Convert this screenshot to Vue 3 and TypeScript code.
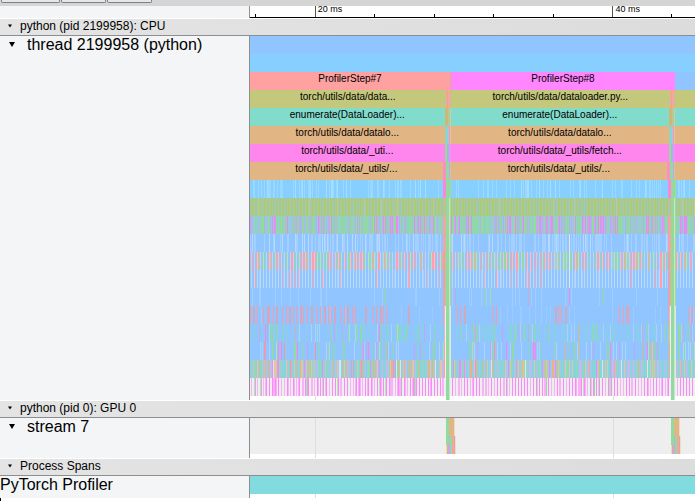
<script setup lang="ts">
import { reactive } from 'vue'

interface Slice { w: number; c: string; t?: string }
interface Bar { x: number; y: number; w: number; h: number; c: string }
interface Lane { base: string; density: number; colors: [string, number][]; period?: number; tick?: string }

const blue = '#91c5ff'
const sky = '#87cfff'
const olive = '#c4c87c'
const mint = '#82dccc'
const tan = '#e2b585'
const green = '#91dba0'
const rose = '#ff9fa9'
const pink = '#ff86ec'
const magenta = '#ff86ff'
const violet = '#c3a5f3'
const grey = '#eeeeee'

const open = reactive({ cpu: true, thread: true, gpu: true, stream: true, spans: true })

const row = (c: string, first: number, a: string, second: number, b: string, seam: [number, string][]): Slice[] => [
  { w: first, c, t: a },
  ...seam.map(([w, s]) => ({ w, c: s })),
  { w: second, c, t: b },
  ...seam.map(([w, s]) => ({ w, c: s })),
  { w: 20, c },
]

const rows: Slice[][] = [
  [{ w: 445, c: blue }],
  [{ w: 445, c: sky }],
  [
    { w: 200, c: '#ffa1a1', t: 'ProfilerStep#7' },
    { w: 1, c: '#d7ad8c' },
    { w: 224, c: magenta, t: 'ProfilerStep#8' },
    { w: 20, c: blue },
  ],
  row(olive, 196, 'torch/utils/data/data...', 220, 'torch/utils/data/dataloader.py...', [[1, rose], [1, '#e2a98e'], [2, '#f6a4a4'], [1, '#d0bd83']]),
  row(mint, 195, 'enumerate(DataLoader)...', 219, 'enumerate(DataLoader)...', [[3, '#ceb878'], [1, green], [1, tan], [1, '#bed3aa']]),
  row(tan, 195, 'torch/utils/data/datalo...', 219, 'torch/utils/data/datalo...', [[1, '#a9cdb0'], [2, '#83d5d8'], [1, '#e0b892'], [1, violet], [1, '#e8c19d']]),
  row(pink, 195, 'torch/utils/data/_uti...', 219, 'torch/utils/data/_utils/fetch...', [[2, green], [1, '#b0b7c5'], [2, violet], [1, '#ed99ed']]),
  row(tan, 193, 'torch/utils/data/_utils/...', 217, 'torch/utils/data/_utils/...', [[3, '#fb8dc7'], [3, green], [1, violet], [1, '#d8bfa4']]),
]

const lanes: Lane[] = [
  { base: sky, density: 0.24, colors: [['#9ad8ff', 4], ['#a6deff', 1]] },
  { base: '#adcb77', density: 0.12, colors: [['#b9cc91', 2], ['#a0cba0', 2]], period: 3, tick: '#a1c8c0' },
  { base: '#91d4b3', density: 0.74, colors: [[green, 7], ['#b2b3e8', 5], ['#9ac7e4', 5], [violet, 2], ['#e78bed', 1]] },
  { base: blue, density: 0.38, colors: [['#a4d0ff', 5], ['#b6dafd', 1]] },
  { base: blue, density: 0.62, colors: [[rose, 5], [green, 5], ['#c6b5d5', 2], ['#a0d4c8', 2]], period: 3, tick: '#b9d6f8' },
  { base: blue, density: 0.14, colors: [[rose, 3], ['#e5b0c7', 2], ['#a8cfff', 3]], period: 3, tick: '#b9d9fa' },
  { base: blue, density: 0.11, colors: [['#a1ceff', 1]] },
  { base: blue, density: 0.06, colors: [['#9dcbff', 1]] },
  { base: blue, density: 0.34, colors: [['#85d3dc', 8], [green, 4], ['#aad1fa', 4], [violet, 1], ['#d3aacb', 1]] },
  { base: blue, density: 0.28, colors: [['#aed3fb', 6], [green, 3], ['#8dd3c0', 3], [violet, 1], ['#f985ec', 1], ['#d6b883', 1]] },
  { base: '#84d5dc', density: 0.72, colors: [['#ddc6a2', 3], ['#a0c9e9', 5], ['#c5b9ee', 4], ['#91dbb4', 3], [tan, 2], ['#e691ed', 2], ['#d5e8e7', 1]] },
  { base: grey, density: 0.26, colors: [['#f8b3f7', 6], ['#b6e3b8', 2], [green, 1]], period: 3, tick: magenta },
]

// Repeatable generator, so that the trace is drawn the same way each time.
let seed = 2199958
function random(): number {
  seed = (Math.imul(seed, 1664525) + 1013904223) >>> 0
  return seed / 4294967296
}

function pick(colors: [string, number][]): string {
  let r = random() * colors.reduce((sum, [, n]) => sum + n, 0)
  for (const [c, n] of colors) {
    r -= n
    if (r < 0) return c
  }
  return colors[0][0]
}

const bars: Bar[] = []
lanes.forEach((lane, i) => {
  const y = i * 18
  bars.push({ x: 0, y, w: 445, h: 18, c: lane.base })
  for (let x = 0; x < 445; x++) {
    if (lane.period && lane.tick && x % lane.period === 1) {
      bars.push({ x, y, w: 1, h: 18, c: i === 11 && random() < 0.35 ? '#f8b3f7' : lane.tick })
    } else if (random() < lane.density) {
      bars.push({ x, y, w: 1, h: 18, c: i === 2 && x > 124 && random() < 0.2 ? '#e98bea' : pick(lane.colors) })
    }
  }
})

const errorRuns = [0, 3, 7, 13, 17, 19, 23, 26, 32, 36, 39, 43, 46, 50, 53, 57, 61, 67, 70, 74, 78, 81, 84, 90, 94, 97, 102, 105, 115, 123, 126, 130, 133, 137, 158, 207, 210, 214, 243, 246, 305, 308, 311, 315, 369, 373, 376, 379, 438, 441]
errorRuns.forEach((x, i) => bars.push({ x, y: 126, w: i % 3 === 1 ? 2 : 1, h: 18, c: i % 3 === 1 ? '#cda9c2' : '#f19dad' }))

const marks: Bar[] = [
  { x: 135, y: 108, w: 1, h: 18, c: green },
  { x: 205, y: 108, w: 1, h: 18, c: violet },
  { x: 234, y: 108, w: 1, h: 18, c: green },
  { x: 241, y: 108, w: 1, h: 18, c: '#91d4b3' },
  { x: 278, y: 108, w: 1, h: 18, c: '#d0a8ca' },
  { x: 319, y: 54, w: 1, h: 54, c: '#e3e8e6' },
  { x: 319, y: 108, w: 1, h: 18, c: '#ed8bed' },
  { x: 353, y: 108, w: 1, h: 18, c: green },
  { x: 15, y: 144, w: 1, h: 18, c: '#e889ec' },
  { x: 15, y: 162, w: 1, h: 18, c: '#d5b77c' },
  { x: 31, y: 162, w: 1, h: 18, c: '#f985d9' },
  { x: 34, y: 162, w: 1, h: 18, c: '#e889ec' },
  { x: 47, y: 162, w: 1, h: 18, c: '#f985d9' },
  { x: 129, y: 144, w: 1, h: 18, c: '#ee8bd3' },
  { x: 174, y: 144, w: 1, h: 18, c: violet },
]
bars.push(...marks)

for (const x of [193, 418]) {
  bars.push(
    { x, y: 0, w: 3, h: 18, c: '#fd86d7' },
    { x: x + 1, y: 18, w: 2, h: 18, c: '#c5bd91' },
    { x, y: 36, w: 2, h: 36, c: '#f99db0' },
    { x: x + 2, y: 36, w: 1, h: 90, c: tan },
    { x, y: 72, w: 2, h: 54, c: '#e0a4b3' },
    { x, y: 126, w: 1, h: 18, c: '#d4a8c6' },
    { x: x + 1, y: 126, w: 1, h: 54, c: '#e8b7b7' },
    { x: x + 1, y: 162, w: 1, h: 36, c: rose },
    { x: x + 2, y: 126, w: 6, h: 90, c: grey },
    { x: x + 6, y: 126, w: 2, h: 72, c: '#d9ead8' },
    { x: x + 3, y: 0, w: 4, h: 126, c: green },
    { x: x + 3, y: 126, w: 3, h: 94, c: green },
    { x: x + 6, y: 18, w: 1, h: 108, c: '#c7e8bd' },
    { x: x + 7, y: 0, w: 1, h: 126, c: '#a5d795' },
    { x: x + 6, y: 126, w: 1, h: 94, c: '#c8e5ce' },
  )
}

const kernels: Bar[] = [196, 421].flatMap((x) => [
  { x, y: 0, w: 3, h: 27, c: green },
  { x: x + 3, y: 0, w: 5, h: 18, c: tan },
  { x: x + 8, y: 0, w: 1, h: 18, c: '#e8dcc7' },
  { x, y: 27, w: 1, h: 9, c: '#ead9bd' },
  { x: x + 1, y: 27, w: 1, h: 9, c: '#d7b47c' },
  { x: x + 2, y: 27, w: 2, h: 9, c: '#d79df2' },
  { x: x + 3, y: 18, w: 1, h: 9, c: '#aebac5' },
  { x: x + 4, y: 18, w: 2, h: 18, c: green },
  { x: x + 6, y: 18, w: 1, h: 18, c: '#e8aa9b' },
  { x: x + 7, y: 18, w: 1, h: 18, c: rose },
  { x: x + 8, y: 18, w: 1, h: 18, c: '#e5a58d' },
  { x: x + 9, y: 18, w: 1, h: 18, c: '#eadfca' },
])

const ticks = [
  { w: 60, label: '' },
  { w: 59, label: '20 ms' },
  { w: 60, label: '' },
  { w: 59, label: '' },
  { w: 60, label: '' },
  { w: 60, label: '' },
  { w: 59, label: '40 ms' },
  { w: 23, label: '' },
]
</script>

<template>
  <main class="viewer">
    <div class="toolbar">
      <button class="tool wide" type="button" aria-label="Record"></button>
      <button class="tool" type="button" aria-label="Save"></button>
      <button class="tool" type="button" aria-label="Load"></button>
    </div>

    <div class="line ruler-line">
      <div class="heading"></div>
      <div class="ruler">
        <span class="gap"></span>
        <div v-for="(tick, i) in ticks" :key="i" class="tick" :class="{ major: tick.label }" :style="{ flexGrow: tick.w }">
          <span v-if="tick.label" class="time">{{ tick.label }}</span>
        </div>
      </div>
    </div>

    <button class="group" type="button" :aria-expanded="open.cpu" @click="open.cpu = !open.cpu">
      <svg class="arrow" viewBox="0 0 5 4"><path d="M0 0H5L2.5 4Z" /></svg>
      <span>python (pid 2199958): CPU</span>
    </button>
    <section v-show="open.cpu" class="line">
      <div class="heading">
        <button class="thread" type="button" :aria-expanded="open.thread" @click="open.thread = !open.thread">
          <svg class="arrow big" viewBox="0 0 6 5"><path d="M0 0H6L3 5Z" /></svg>
          <span>thread 2199958 (python)</span>
        </button>
      </div>
      <div v-show="open.thread" class="track">
        <div v-for="(slices, i) in rows" :key="i" class="slices">
          <span v-for="(s, j) in slices" :key="j" class="slice" :style="{ flexGrow: s.w, background: s.c }">{{ s.t }}</span>
        </div>
        <svg class="lanes" viewBox="0 0 445 220" preserveAspectRatio="none" shape-rendering="crispEdges">
          <path d="M65 216h1v4h-1zM363 216h1v4h-1z" fill="#dedede" />
          <rect v-for="(b, i) in bars" :key="i" :x="b.x" :y="b.y" :width="b.w" :height="b.h" :fill="b.c" />
        </svg>
      </div>
    </section>

    <button class="group" type="button" :aria-expanded="open.gpu" @click="open.gpu = !open.gpu">
      <svg class="arrow" viewBox="0 0 5 4"><path d="M0 0H5L2.5 4Z" /></svg>
      <span>python (pid 0): GPU 0</span>
    </button>
    <section v-show="open.gpu" class="line">
      <div class="heading">
        <button class="thread" type="button" :aria-expanded="open.stream" @click="open.stream = !open.stream">
          <svg class="arrow big" viewBox="0 0 6 5"><path d="M0 0H6L3 5Z" /></svg>
          <span>stream 7</span>
        </button>
      </div>
      <div v-show="open.stream" class="track">
        <svg class="stream" viewBox="0 0 445 40" preserveAspectRatio="none" shape-rendering="crispEdges">
          <rect width="445" height="36" fill="#eeeeee" />
          <path d="M65 0h1v40h-1zM363 0h1v40h-1z" fill="#dedede" />
          <rect v-for="(b, i) in kernels" :key="i" :x="b.x" :y="b.y" :width="b.w" :height="b.h" :fill="b.c" />
        </svg>
      </div>
    </section>

    <button class="group" type="button" :aria-expanded="open.spans" @click="open.spans = !open.spans">
      <svg class="arrow" viewBox="0 0 5 4"><path d="M0 0H5L2.5 4Z" /></svg>
      <span>Process Spans</span>
    </button>
    <section v-show="open.spans" class="line">
      <div class="heading last">PyTorch Profiler</div>
      <div class="track">
        <svg class="spans" viewBox="0 0 445 22" preserveAspectRatio="none" shape-rendering="crispEdges">
          <rect width="445" height="18" fill="#82dbde" />
          <path d="M65 18h1v4h-1zM363 18h1v4h-1z" fill="#dedede" />
        </svg>
      </div>
    </section>
    <div class="details"></div>
  </main>
</template>

<style>
body {
  margin: 0;
  background: #fff;
}
</style>

<style scoped>
.viewer {
  display: flex;
  flex-direction: column;
  min-height: 100vh;
  overflow: hidden;
  font-family: "Liberation Sans", Arial, sans-serif;
  color: #000;
}
button {
  margin: 0;
  padding: 0;
  border: 0;
  background: none;
  font: inherit;
  color: inherit;
  text-align: left;
  cursor: pointer;
}
.toolbar {
  display: flex;
  gap: 1px;
  height: 6px;
  padding-left: 1px;
  background: #d5d5d5;
}
.toolbar .tool {
  width: 45px;
  height: 3px;
  border: solid #808080;
  border-width: 0 1px 1px;
  border-radius: 0 0 2px 2px;
  background: #e7e7e7;
}
.toolbar .wide {
  width: 59px;
}
.line {
  display: flex;
}
.heading {
  flex: none;
  box-sizing: border-box;
  width: 250px;
  border-right: 1px solid #8e8e8e;
  background: #f3f5f7;
}
.last {
  font-size: 16px;
  line-height: 18px;
}
.ruler-line {
  height: 12px;
}
.ruler {
  display: flex;
  flex: 1;
  align-items: flex-end;
  box-sizing: border-box;
  min-width: 0;
  border-bottom: 1px solid #000;
}
.gap {
  flex: 5 1 0;
}
.tick {
  flex: 1 1 0;
  box-sizing: border-box;
  min-width: 0;
  height: 3px;
  border-left: 1px solid #000;
}
.major {
  height: 11px;
  border-left-color: #555;
  font-size: 9px;
  line-height: 6px;
}
.time {
  display: block;
  padding-left: 2px;
}
.group {
  display: flex;
  gap: 8px;
  height: 18px;
  padding-left: 8px;
  border-top: 1px solid #fff;
  border-bottom: 1px solid #8e8e8e;
  background: linear-gradient(90deg, #e4e4e4, #dcdcdc);
  font-size: 12px;
  line-height: 14px;
}
.arrow {
  flex: none;
  width: 4px;
  height: 4px;
  margin-top: 5px;
}
.big {
  width: 6px;
  height: 5px;
  margin-top: 6px;
}
.thread {
  display: flex;
  gap: 12px;
  padding-left: 9px;
  font-size: 16px;
  line-height: 18px;
}
.track {
  flex: 1;
  min-width: 0;
}
.slices {
  display: flex;
  height: 18px;
}
.slice {
  flex: 1 1 0;
  min-width: 0;
  overflow: hidden;
  font-size: 10px;
  line-height: 14px;
  text-align: center;
  white-space: nowrap;
}
.lanes,
.stream,
.spans {
  display: block;
  width: 100%;
}
.lanes {
  height: 220px;
}
.stream {
  height: 40px;
}
.spans {
  height: 22px;
}
.details {
  flex: 1;
  border-left: 1px solid #000;
}
</style>
